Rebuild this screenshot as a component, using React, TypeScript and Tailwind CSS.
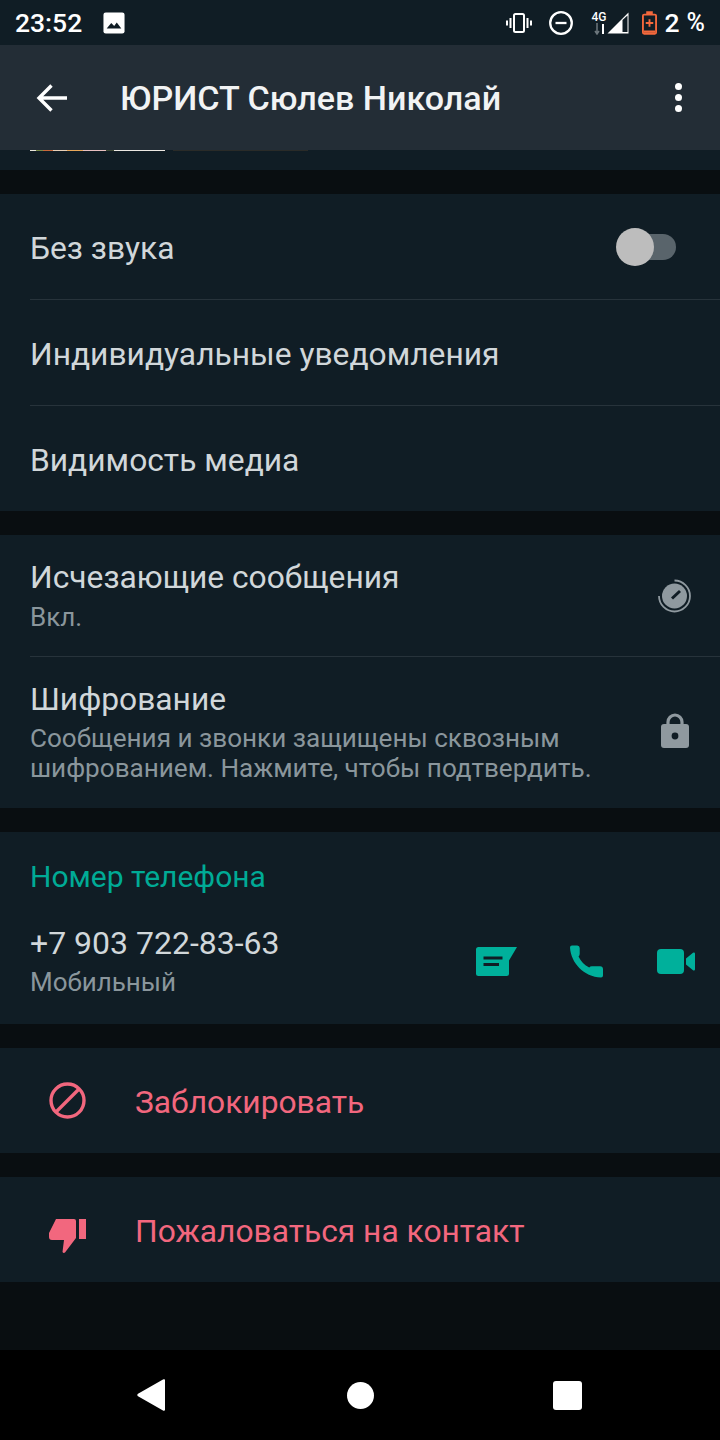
const roboto = "font-['Roboto',sans-serif]";

function Divider() {
  return <div className="ml-[30px] h-px bg-[#27333b]" />;
}

function Row({ label, children }: { label: string; children?: React.ReactNode }) {
  return (
    <div className="flex h-[105px] items-center justify-between pl-[30px] pr-[44px]">
      <span className="pt-[4px] text-[31.75px] leading-[40px] text-[#d1d7da]">{label}</span>
      {children}
    </div>
  );
}

function ActionRow({ label, icon }: { label: string; icon: React.ReactNode }) {
  return (
    <div className="flex h-[105px] items-center bg-[#101d25]">
      <div className="flex w-[135px] justify-center pr-[1px]">{icon}</div>
      <span className="pt-[5px] text-[31.75px] leading-[40px] text-[#f2677e]">{label}</span>
    </div>
  );
}

export default function App() {
  return (
    <div className={`flex h-[1440px] w-[720px] flex-col overflow-hidden bg-[#090e11] ${roboto}`}>
      {/* status bar */}
      <div className="flex h-[45px] items-center bg-[#101d25] pl-[15px] pr-[15px] text-white">
        <span className="text-[26.500px] font-medium leading-[45px]">23:52</span>
        <svg className="ml-[21px]" width="22" height="22" viewBox="0 0 24 24">
          <rect x="0.500" y="0.500" width="23" height="23" rx="2.500" fill="#fff" />
          <path d="M4 18l5-6 3.200 3.400L15 11.500 20 18z" fill="#101d25" />
        </svg>
        <div className="ml-auto flex items-center">
          <svg width="26" height="20" viewBox="0 0 26 20" fill="none" stroke="#fff">
            <rect x="8" y="1" width="10" height="18" rx="1.500" strokeWidth="2" />
            <path d="M4.500 5v10M1 7.500v5M21.500 5v10M25 7.500v5" strokeWidth="2" />
          </svg>
          <svg className="ml-[17px]" width="24" height="24" viewBox="0 0 24 24" fill="none" stroke="#fff" strokeWidth="2.300">
            <circle cx="12" cy="12" r="10.800" />
            <path d="M6.500 12h11" />
          </svg>
          <div className="relative ml-[19px] h-[24px] w-[15px]">
            <span className="absolute left-0 top-[1px] text-[12px] font-medium leading-[11px] text-white">4G</span>
            <svg className="absolute left-[1px] top-[12px]" width="14" height="12" viewBox="0 0 14 12">
              <path d="M4 0v10M2 8l2 3 2-3" stroke="#6d777d" strokeWidth="1.500" fill="none" />
              <path d="M10 11V1" stroke="#fff" strokeWidth="2" />
            </svg>
          </div>
          <svg width="22" height="22" viewBox="0 0 22 22" fill="none">
            <path d="M21.500 21.500V.5L.5 21.500z" fill="#fff" />
            <path d="M15.500 8v12h5V3.500z" fill="#101d25" />
          </svg>
          <svg className="ml-[13px]" width="15" height="24" viewBox="0 0 16 25">
            <path d="M4.500 0h7v2.500h2.200A2.300 2.300 0 0 1 16 4.800v17.900a2.300 2.300 0 0 1-2.300 2.300H2.300A2.300 2.300 0 0 1 0 22.700V4.800a2.300 2.300 0 0 1 2.300-2.300h2.200z" fill="#f4683c" />
            <rect x="2" y="4.500" width="12" height="18.500" fill="#101d25" />
            <rect x="2" y="20.500" width="12" height="2.500" fill="#f4683c" />
            <path d="M7 8.500h2v3h3v2H9v3H7v-3H4v-2h3z" fill="#f4683c" />
          </svg>
          <span className="ml-[8px] text-[26.500px] font-medium leading-[45px]">2</span>
          <span className="ml-[7px] text-[25px] font-medium leading-[45px]">%</span>
        </div>
      </div>

      {/* app bar */}
      <div className="flex h-[105px] items-center bg-[#232d36] text-white">
        <svg className="ml-[36px]" width="32" height="30" viewBox="0 0 32 30" fill="none" stroke="#fff" strokeWidth="3.400">
          <path d="M31 15H3M15.500 2.500 3 15l12.500 12.500" />
        </svg>
        <span className="ml-[52px] text-[34.100px] font-medium leading-[44px] text-[#f1f3f4]">ЮРИСТ Сюлев Николай</span>
        <div className="ml-auto mr-[38px] flex flex-col gap-[4px]">
          <div className="h-[7px] w-[7px] rounded-full bg-white" />
          <div className="h-[7px] w-[7px] rounded-full bg-white" />
          <div className="h-[7px] w-[7px] rounded-full bg-white" />
        </div>
      </div>

      {/* rest of the section above, scrolled under the bar */}
      <div className="h-[20px] bg-[#101d25]">
        <div className="flex">
          <div className="ml-[30px] h-px w-[6px] bg-[#e8e4da]" />
          <div className="h-px w-[7px] bg-[#7a8a4a]" />
          <div className="h-px w-[10px] bg-[#c9683a]" />
          <div className="h-px w-[14px] bg-[#e8d0b8]" />
          <div className="h-px w-[16px] bg-[#e8a85a]" />
          <div className="h-px w-[23px] bg-[#e8c0c0]" />
          <div className="h-px w-[8px] bg-[#3f4a36]" />
          <div className="h-px w-[51px] bg-[#ece8e2]" />
          <div className="ml-[8px] h-px w-[135px] bg-[#2a2b28]" />
        </div>
      </div>

      <div className="mt-[24px] bg-[#101d25]">
        <Row label="Без звука">
          <div className="relative h-[26px] w-[44px] rounded-full bg-[#59646b]">
            <div className="absolute left-[-16px] top-[-6px] h-[38px] w-[38px] rounded-full bg-[#bdbdbd]" />
          </div>
        </Row>
        <Divider />
        <Row label="Индивидуальные уведомления" />
        <Divider />
        <Row label="Видимость медиа" />
      </div>

      <div className="mt-[24px] bg-[#101d25]">
        <div className="flex h-[121px] items-center justify-between pl-[30px] pr-[29px]">
          <div className="self-start pt-[23px]">
            <div className="text-[31.75px] leading-[40px] text-[#d1d7da]">Исчезающие сообщения</div>
            <div className="mt-[2px] text-[26px] leading-[35px] text-[#8a969c]">Вкл.</div>
          </div>
          <svg className="mt-[1px]" width="34" height="34" viewBox="0 0 34 34" fill="none">
            <path d="M17.500 1.500A15.500 15.500 0 1 1 2 17" stroke="#8f999f" strokeWidth="1.800" />
            <circle cx="17.500" cy="17" r="12.500" fill="#8f999f" />
            <path d="M15 19.500l8-7.500" stroke="#101d25" strokeWidth="3" />
          </svg>
        </div>
        <Divider />
        <div className="flex h-[151px] items-center justify-between pl-[30px] pr-[31px]">
          <div className="self-start pt-[23px]">
            <div className="text-[31.75px] leading-[40px] text-[#d1d7da]">Шифрование</div>
            <div className="mt-[3px] text-[26.100px] leading-[30px] text-[#8a969c]">
              Сообщения и звонки защищены сквозным
              <br />
              шифрованием. Нажмите, чтобы подтвердить.
            </div>
          </div>
          <svg className="mb-[3px]" width="28" height="36" viewBox="0 0 28 36" fill="none">
            <path d="M7 14V9a7 7 0 0 1 14 0v5" stroke="#8f999f" strokeWidth="3.200" />
            <rect x="0" y="11" width="28" height="24" rx="3" fill="#8f999f" />
            <circle cx="14" cy="23" r="3.400" fill="#101d25" />
          </svg>
        </div>
      </div>

      <div className="mt-[24px] h-[192px] bg-[#101d25] pl-[30px] pr-[25px]">
        <div className="pt-[25px] text-[30px] leading-[40px] text-[#00ab96]">Номер телефона</div>
        <div className="mt-[26px] flex items-center justify-between">
          <div>
            <div className="text-[32px] leading-[40px] text-[#d1d7da]">+7 903 722-83-63</div>
            <div className="mt-[3px] text-[26px] leading-[33px] text-[#8a969c]">Мобильный</div>
          </div>
          <div className="flex items-center">
            <svg width="41" height="29" viewBox="0 0 41 29">
              <path d="M2.500 0H41l-8 13.500v13A2.500 2.500 0 0 1 30.500 29h-28A2.500 2.500 0 0 1 0 26.500v-24A2.500 2.500 0 0 1 2.500 0z" fill="#00b09b" />
              <path d="M7.500 11h19M7.500 17.500h15.500" stroke="#101d25" strokeWidth="3.200" />
            </svg>
            <svg className="ml-[53px]" width="33" height="33" viewBox="0 0 34 33">
              <path d="M2 0h5.500a2.600 2.600 0 0 1 2.500 2.500v6a3.500 3.500 0 0 1-1.200 2.800c2.500 5 6 9 11 11.500a3.500 3.500 0 0 1 2.700-1.300h8.500a3 3 0 0 1 3 3V31a2 2 0 0 1-2 2C14 32 1 18 0 2a2 2 0 0 1 2-2z" fill="#00b09b" />
            </svg>
            <svg className="ml-[54px]" width="38" height="25" viewBox="0 0 38 25">
              <rect x="0" y="0" width="27" height="25" rx="4" fill="#00b09b" />
              <path d="M29 9.500l7-5.700a1.200 1.200 0 0 1 2 .9v15.600a1.200 1.200 0 0 1-2 .9l-7-5.700z" fill="#00b09b" />
            </svg>
          </div>
        </div>
      </div>

      <div className="mt-[24px]">
        <ActionRow
          label="Заблокировать"
          icon={
            <svg width="37" height="37" viewBox="0 0 37 37" fill="none" stroke="#f2677e" strokeWidth="3.400">
              <circle cx="18.500" cy="18.500" r="16.500" />
              <path d="M7 30 30 7" />
            </svg>
          }
        />
      </div>
      <div className="mt-[24px]">
        <ActionRow
          label="Пожаловаться на контакт"
          icon={
            <svg className="mt-[12px]" width="37" height="34" viewBox="0 0 37 34" fill="#f2677e">
              <path d="M7 0h18a2 2 0 0 1 2 2v17L16 33.500q-1.500 1-2.500-.5L15 21H3a3 3 0 0 1-3-3v-4z" />
              <rect x="30" y="0" width="7" height="20" />
            </svg>
          }
        />
      </div>

      {/* nav bar */}
      <div className="mt-auto flex h-[90px] items-center bg-black">
        <svg className="ml-[137px]" width="28" height="32" viewBox="0 0 28 32">
          <path d="M1 14.800 26 .5a1.200 1.200 0 0 1 2 1v29a1.200 1.200 0 0 1-2 1L1 17.200a1.400 1.400 0 0 1 0-2.400z" fill="#fff" />
        </svg>
        <div className="ml-[182px] h-[27px] w-[27px] rounded-full bg-white" />
        <div className="ml-[179px] h-[29px] w-[29px] rounded-[3px] bg-white" />
      </div>
    </div>
  );
}
